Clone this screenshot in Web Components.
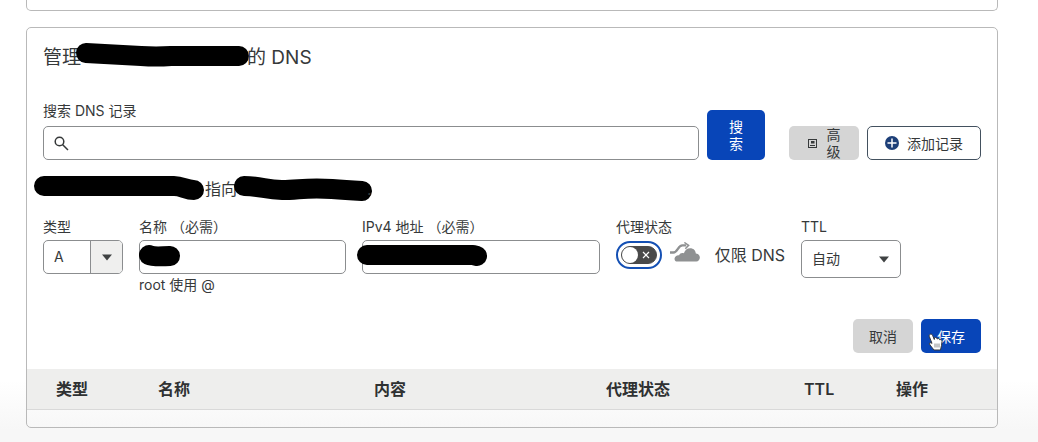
<!DOCTYPE html>
<html lang="zh-CN">
<head>
<meta charset="utf-8">
<title>DNS</title>
<style>
  html {
    min-height: 100%;
    background: linear-gradient(#fff 380px, #f7f7f7 430px) no-repeat #f7f7f7;
  }
  body {
    margin: 0;
    font-family: Inter, "Noto Sans CJK SC", sans-serif;
    font-size: 14px;
    line-height: 18px;
    color: #36393a;
    --dns-blue: #0845b8;
    --dns-border: #8b8d8f;
    --dns-grey: #d5d5d5;
  }
</style>
</head>
<body>
<dns-page></dns-page>

<script>
const define = (name, html, setup) => {
  const template = document.createElement('template');
  template.innerHTML = html;

  window.customElements.define(name, class extends HTMLElement {
    constructor() {
      super();
      this.attachShadow({mode: 'open'});
      this.shadowRoot.appendChild(template.content.cloneNode(true));
    }

    connectedCallback() {
      if (setup) {
        setup(this, this.shadowRoot);
      }
    }
  });
};

define('dns-card', `
<style>
  :host {
    display: block;
    border: 1px solid #b9b9b9;
    border-radius: 5px;
    overflow: hidden;
  }
  :host([tail]) {
    height: 10px;
    border-top: 0;
    border-radius: 0 0 5px 5px;
  }
</style>
<slot></slot>
`);

// Marker stroke over private text. The box keeps the width of the hidden text.
define('dns-redact', `
<style>
  :host {
    display: inline-block;
    height: 20px;
    vertical-align: middle;
  }
  svg {
    display: block;
    overflow: visible;
  }
  path {
    fill: none;
    stroke: #000;
    stroke-width: 20;
    stroke-linecap: round;
    stroke-linejoin: round;
  }
</style>
<svg width="1" height="20"><path></path></svg>
`, (host, root) => {
  host.style.width = host.getAttribute('width') + 'px';
  root.querySelector('path').setAttribute('d', host.getAttribute('stroke'));
});

define('dns-button', `
<style>
  :host {
    display: block;
  }
  button {
    display: flex;
    align-items: center;
    justify-content: center;
    gap: 10px;
    box-sizing: border-box;
    width: 100%;
    min-height: 34px;
    padding: 0 16px;
    border: 0;
    border-radius: 5px;
    background: var(--dns-grey);
    color: inherit;
    font: inherit;
    line-height: 17px;
    cursor: pointer;
  }
  :host([kind="primary"]) button {
    background: var(--dns-blue);
    color: #fff;
  }
  :host([kind="outline"]) button {
    gap: 8px;
    padding: 0 17px;
    background: #fff;
    border: 1px solid #43515f;
  }
  :host([tall]) button {
    min-height: 50px;
    padding: 0 22px;
  }
</style>
<button type="button"><slot name="icon"></slot><span><slot></slot></span></button>
`);

define('dns-input', `
<style>
  :host {
    display: block;
    min-width: 0;
  }
  label {
    display: block;
    margin-bottom: var(--label-gap, 4px);
    white-space: pre;
  }
  .box {
    display: flex;
    align-items: center;
    box-sizing: border-box;
    height: 34px;
    border: 1px solid var(--dns-border);
    border-radius: 5px;
    background: #fff;
  }
  input {
    flex: 1;
    min-width: 0;
    height: 100%;
    box-sizing: border-box;
    padding: 0 8px;
    border: 0;
    outline: 0;
    background: none;
    font: inherit;
    color: inherit;
  }
  .hint {
    margin-top: 2px;
  }
  .hint:empty {
    display: none;
  }
</style>
<label for="input"></label>
<div class="box"><slot></slot><input id="input" type="text"></div>
<div class="hint"></div>
`, (host, root) => {
  root.querySelector('label').textContent = host.getAttribute('label');
  root.querySelector('.hint').textContent = host.getAttribute('hint') || '';
});

define('dns-select', `
<style>
  :host {
    display: block;
  }
  label {
    display: block;
    margin-bottom: 4px;
  }
  .box {
    display: grid;
    grid-template-columns: 1fr 32px;
    align-items: center;
    box-sizing: border-box;
    height: 38px;
    border: 1px solid var(--dns-border);
    border-radius: 5px;
    background: #fff;
    overflow: hidden;
  }
  select {
    grid-area: 1 / 1 / 2 / 3;
    height: 100%;
    padding: 0 10px;
    border: 0;
    outline: 0;
    appearance: none;
    background: none;
    font: inherit;
    color: inherit;
  }
  .arrow {
    grid-area: 1 / 2;
    display: grid;
    place-items: center;
    height: 100%;
    box-sizing: border-box;
    pointer-events: none;
  }
  :host([split]) .box {
    height: 34px;
  }
  :host([split]) .arrow {
    border-left: 1px solid var(--dns-border);
    background: #efefee;
  }
</style>
<label for="select"></label>
<div class="box">
  <select id="select"><option></option></select>
  <span class="arrow"><svg width="10" height="7"><path d="M0 0.5h10L5 6.5z" fill="#3f4243"/></svg></span>
</div>
`, (host, root) => {
  root.querySelector('label').textContent = host.getAttribute('label');
  root.querySelector('option').textContent = host.getAttribute('value');
});

define('dns-proxy', `
<style>
  :host {
    display: block;
  }
  label {
    display: block;
    margin-bottom: 4px;
  }
  .row {
    display: flex;
    align-items: center;
    height: 30px;
    font-size: 16px;
    white-space: nowrap;
  }
  .ring {
    display: grid;
    padding: 3px;
    border: 2px solid #1450b4;
    border-radius: 14px;
    background: #fff;
  }
  input {
    grid-area: 1 / 1;
    display: flex;
    align-items: center;
    width: 36px;
    height: 18px;
    margin: 0;
    border: 1px solid #4a4a4a;
    border-radius: 9px;
    appearance: none;
    background: #4a4a4a;
    outline: 0;
  }
  input::before {
    content: "";
    width: 16px;
    height: 16px;
    border-radius: 8px;
    background: #fff;
  }
  .ring svg {
    grid-area: 1 / 1;
    place-self: center end;
    margin-right: 7px;
    pointer-events: none;
  }
  .cloud {
    margin: 0 14px 6px 8px;
  }
</style>
<label for="proxied">代理状态</label>
<div class="row">
  <span class="ring">
    <input id="proxied" type="checkbox">
    <svg width="8" height="8"><path d="M1 1l6 6M7 1l-6 6" stroke="#fff" stroke-width="1.2"/></svg>
  </span>
  <svg class="cloud" width="32" height="21" viewBox="0 0 32 21">
    <path d="M8 20C5.500 20 4.500 18.500 4.800 16.500 5.100 14.500 7 13 9.500 13.300 10.500 11.300 12.300 10.600 14.500 11.400 15.500 8 18 6 21 6c3.500 0 5.800 2.300 6 5.500 2.500.2 4.200 2 4.200 4.300S29.600 20 27.500 20z" fill="#8f9192"/>
    <path d="M3 12C9 11.500 8.500 4.500 14 4.500" fill="none" stroke="#fff" stroke-width="4.500"/>
    <path d="M0 10.500h3.500c5 0 4.500-7.500 9.500-7.500h4" fill="none" stroke="#8f9192" stroke-width="2.400"/>
    <path d="M15 0l4.500 3L16 6.500" fill="none" stroke="#8f9192" stroke-width="1.500"/>
  </svg>
  <span>仅限 DNS</span>
</div>
`);

define('dns-table', `
<style>
  :host {
    display: block;
  }
  table {
    width: 100%;
    table-layout: fixed;
    border-collapse: collapse;
    font-size: 16px;
  }
  th {
    height: 40px;
    padding: 0 0 0 29px;
    background: #eeeeed;
    color: #2f3132;
    font-weight: 600;
    text-align: left;
  }
  td {
    height: 17px;
    padding: 0;
    border-top: 1px solid #d9d9d9;
  }
</style>
<table>
  <colgroup>
    <col style="width: 102px"><col style="width: 216px"><col style="width: 232px">
    <col style="width: 198px"><col style="width: 92px"><col style="width: 130px">
  </colgroup>
  <thead>
    <tr><th>类型</th><th>名称</th><th>内容</th><th>代理状态</th><th>TTL</th><th>操作</th></tr>
  </thead>
  <tbody>
    <tr><td colspan="6"></td></tr>
  </tbody>
</table>
`);

define('dns-page', `
<style>
  :host {
    display: grid;
    gap: 16px;
    padding: 0 40px 14px 26px;
  }
  .content {
    padding: 16px;
  }
  h2 {
    margin: 0;
    font-size: 19px;
    line-height: 28px;
    font-weight: 400;
    white-space: nowrap;
  }
  .search {
    display: flex;
    align-items: flex-end;
    margin-top: 30px;
    --label-gap: 6px;
  }
  .search dns-input {
    flex: 1;
    margin-right: 8px;
  }
  .search-icon {
    margin-left: 10px;
  }
  .advanced {
    width: 70px;
    margin: 0 8px 0 24px;
  }
  .summary {
    margin: 16px 0;
    font-size: 16px;
    line-height: 26px;
    white-space: nowrap;
  }
  .fields {
    display: grid;
    grid-template-columns: 80px 207fr 238fr 169px 100px;
    gap: 16px;
    padding-right: 80px;
  }
  .actions {
    display: flex;
    justify-content: flex-end;
    gap: 8px;
    margin-top: 25px;
  }
  .save {
    position: relative;
  }
  .pointer {
    position: absolute;
    left: 7px;
    top: 14px;
    pointer-events: none;
  }
</style>
<dns-card tail></dns-card>
<dns-card>
  <div class="content">
    <h2>管理<dns-redact width="166" stroke="M5 4L60 7Q75 8 90 7H158"></dns-redact>的 DNS</h2>

    <div class="search">
      <dns-input label="搜索 DNS 记录">
        <svg class="search-icon" width="15" height="15" fill="none" stroke="#36393a" stroke-width="1.500"><circle cx="5.500" cy="5.500" r="4.300"/><path d="M8.500 8.500L14 14"/></svg>
      </dns-input>
      <dns-button kind="primary" tall>搜<br>索</dns-button>
      <dns-button class="advanced">
        <svg slot="icon" width="9" height="11" fill="none" stroke="#36393a"><rect x="0.500" y="1.500" width="8" height="8"/><path d="M2 7.500h5"/><path d="M3 3h3.500v2.500H3z" fill="#36393a" stroke="none"/></svg>
        高<br>级
      </dns-button>
      <dns-button kind="outline">
        <svg slot="icon" width="14" height="14"><circle cx="7" cy="7" r="7" fill="#1d3f78"/><path d="M7 2.500v9M2.500 7h9" stroke="#fff" stroke-width="1.500"/></svg>
        添加记录
      </dns-button>
    </div>

    <p class="summary"><dns-redact width="162" stroke="M1 5H131Q135 5 141 7T151 9"></dns-redact>指向<dns-redact width="130" stroke="M7 5C25 5 28 9 45 9S70 6 95 8Q108 9 125 10"></dns-redact>.</p>

    <div class="fields">
      <dns-select split label="类型" value="A"></dns-select>
      <dns-input label="名称 （必需）" hint="root 使用 @"><dns-redact width="42" stroke="M9 8Q13 10 30 9"></dns-redact></dns-input>
      <dns-input label="IPv4 地址 （必需）"><dns-redact width="126" stroke="M4 8H110L114 9"></dns-redact></dns-input>
      <dns-proxy></dns-proxy>
      <dns-select label="TTL" value="自动"></dns-select>
    </div>

    <div class="actions">
      <dns-button>取消</dns-button>
      <div class="save">
        <dns-button kind="primary">保存</dns-button>
        <svg class="pointer" width="16" height="18" viewBox="0 0 16 18">
          <path d="M1.500 1.800C2.500.7 4 1 4.500 2.200L6.300 6.500 6.500 4.800C8 4 9 5 9.200 6 10.200 5 11.500 5.600 11.800 6.800 13 6.200 14 7 14 8.500L13.500 12.500 12.500 17H6L2 12C.7 10.300 2 9.200 3.300 10L4 10.400 1.300 3.500C1.100 2.800 1.100 2.200 1.500 1.800z" fill="#fff" stroke="#35373a"/>
          <path d="M7 10.500v4M9 10.500v4M11 10.500v4" stroke="#8a8c8e"/>
        </svg>
      </div>
    </div>
  </div>
  <dns-table></dns-table>
</dns-card>
`);
</script>
</body>
</html>
